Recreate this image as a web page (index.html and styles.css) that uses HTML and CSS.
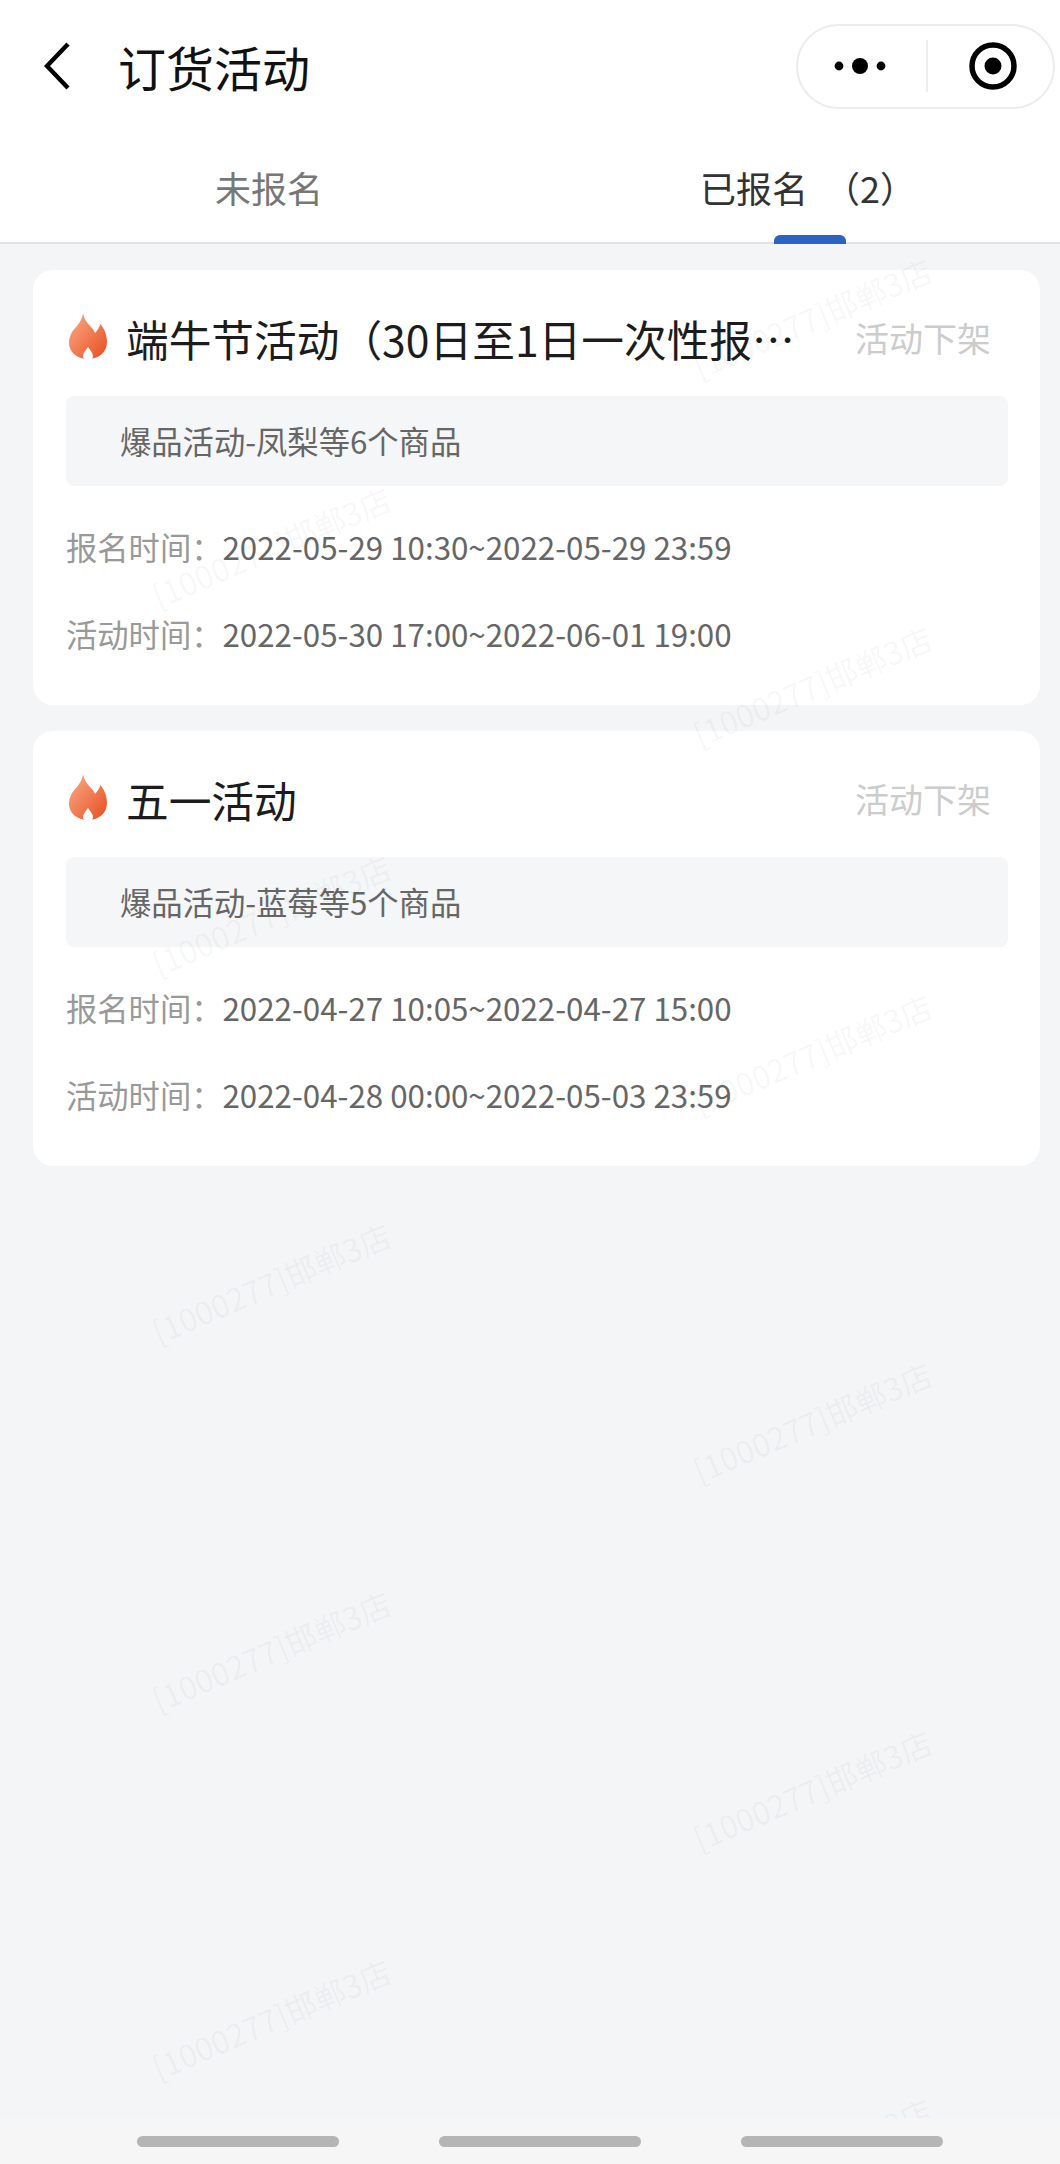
FILE: index.html
```html
<!DOCTYPE html>
<html lang="zh-CN">
<head>
<meta charset="utf-8">
<title>订货活动</title>
<link rel="stylesheet" href="styles.css">
</head>
<body>
<div class="page">
  <header class="nav">
    <div class="nav-bar">
      <svg class="back" viewBox="0 0 26 48" width="26" height="48"><polyline points="24,2 3,24 24,46" fill="none" stroke="#000" stroke-width="4.4"/></svg>
      <h1 class="nav-title">订货活动</h1>
      <div class="capsule">
        <svg class="capsule-dots" viewBox="0 0 56 20" width="56" height="20"><circle cx="6" cy="10" r="4.4" fill="#000"/><circle cx="27" cy="10" r="8" fill="#000"/><circle cx="48" cy="10" r="4.4" fill="#000"/></svg>
        <span class="capsule-line"></span>
        <svg class="capsule-target" viewBox="0 0 48 48" width="48" height="48"><circle cx="24" cy="24" r="21" fill="none" stroke="#000" stroke-width="5.5"/><circle cx="24" cy="24" r="8.5" fill="#000"/></svg>
      </div>
    </div>
    <nav class="tabs">
      <div class="tab">未报名</div>
      <div class="tab tab-active">已报名<span class="tab-count">（2）</span></div>
    </nav>
  </header>

  <main class="list">
    <section class="card">
      <div class="card-head">
        <svg class="flame" viewBox="0 0 38 46" width="38" height="46"><defs><linearGradient id="fa" x1="0.1" y1="0.1" x2="0.9" y2="0.9"><stop offset="0" stop-color="#f9a47e"/><stop offset="1" stop-color="#e9562a"/></linearGradient></defs><path fill-rule="evenodd" d="M14 0C15 6 18 10 22 14C24 16 25.500 18 26 20C28 18 30 15 31.500 11C35.500 16 38 22 38 29C38 39 30 46 19 46C8 46 0 39 0 30C0 22 4 17 8 13C11 9 13.500 5 14 0ZM19 34C17 37 14 40 14 43C14 45 15 46 16 46L22 46C23 46 24 45 24 43C24 40 21 37 19 34Z" fill="url(#fa)"/></svg>
        <h2 class="card-title">端牛节活动（30日至1日一次性报名活动）</h2>
        <span class="card-tag">活动下架</span>
      </div>
      <div class="goods">爆品活动-凤梨等6个商品</div>
      <div class="rows">
        <p class="row"><span class="row-label">报名时间：</span>2022-05-29 10:30~2022-05-29 23:59</p>
        <p class="row"><span class="row-label">活动时间：</span>2022-05-30 17:00~2022-06-01 19:00</p>
      </div>
    </section>
    <section class="card">
      <div class="card-head">
        <svg class="flame" viewBox="0 0 38 46" width="38" height="46"><path fill-rule="evenodd" d="M14 0C15 6 18 10 22 14C24 16 25.500 18 26 20C28 18 30 15 31.500 11C35.500 16 38 22 38 29C38 39 30 46 19 46C8 46 0 39 0 30C0 22 4 17 8 13C11 9 13.500 5 14 0ZM19 34C17 37 14 40 14 43C14 45 15 46 16 46L22 46C23 46 24 45 24 43C24 40 21 37 19 34Z" fill="url(#fa)"/></svg>
        <h2 class="card-title">五一活动</h2>
        <span class="card-tag">活动下架</span>
      </div>
      <div class="goods">爆品活动-蓝莓等5个商品</div>
      <div class="rows">
        <p class="row"><span class="row-label">报名时间：</span>2022-04-27 10:05~2022-04-27 15:00</p>
        <p class="row"><span class="row-label">活动时间：</span>2022-04-28 00:00~2022-05-03 23:59</p>
      </div>
    </section>
  </main>

  <div class="watermarks" aria-hidden="true">
    <div class="wm-col wm-col-left">
      <span class="wm">[1000277]邯郸3店</span>
      <span class="wm">[1000277]邯郸3店</span>
      <span class="wm">[1000277]邯郸3店</span>
      <span class="wm">[1000277]邯郸3店</span>
      <span class="wm">[1000277]邯郸3店</span>
    </div>
    <div class="wm-col wm-col-right">
      <span class="wm">[1000277]邯郸3店</span>
      <span class="wm">[1000277]邯郸3店</span>
      <span class="wm">[1000277]邯郸3店</span>
      <span class="wm">[1000277]邯郸3店</span>
      <span class="wm">[1000277]邯郸3店</span>
      <span class="wm">[1000277]邯郸3店</span>
    </div>
  </div>

  <footer class="tabbar">
    <span class="tabbar-pill"></span>
    <span class="tabbar-pill"></span>
    <span class="tabbar-pill"></span>
  </footer>
</div>
</body>
</html>
```

FILE: styles.css
```css
* { box-sizing: border-box; }

html, body {
  margin: 0;
  padding: 0;
  height: 2164px;
  overflow: hidden;
}

body {
  background: #f4f5f7;
  font-family: "Noto Sans CJK SC", "Noto Sans", sans-serif;
}

.page {
  position: relative;
  height: 2164px;
  display: flex;
  flex-direction: column;
}

/* Header */
.nav {
  position: relative;
  z-index: 2;
  background: #fff;
  border-bottom: 2px solid #e2e3e5;
}

.nav-bar {
  height: 132px;
  display: flex;
  align-items: center;
  padding: 0 5px 0 44px;
}

.back { flex: none; }

.nav-title {
  margin: 0 0 0 48px;
  font-size: 48px;
  line-height: 60px;
  font-weight: 400;
  color: #111;
}

.capsule {
  margin-left: auto;
  width: 259px;
  height: 85px;
  border: 2px solid #ececec;
  border-radius: 43px;
  display: flex;
  align-items: center;
  background: #fff;
}

.capsule-dots { margin-left: 35px; flex: none; }

.capsule-line {
  width: 2px;
  height: 52px;
  margin-left: 37px;
  background: #ececec;
}

.capsule-target { margin-left: 41px; flex: none; }

.tabs {
  height: 110px;
  display: flex;
}

.tab {
  position: relative;
  flex: 0 0 50%;
  display: flex;
  justify-content: center;
  padding: 29px 0 0 8px;
  font-size: 36px;
  line-height: 52px;
  color: #777;
}

.tab-active {
  padding-left: 26px;
  color: #333;
}

.tab-count { margin-left: 16px; }

.tab-active::after {
  content: "";
  position: absolute;
  left: 244px;
  bottom: -2px;
  width: 72px;
  height: 9px;
  border-radius: 6px 6px 0 0;
  background: #2b62c4;
}

/* Cards */
.list {
  flex: 1;
  padding: 26px 20px 0 33px;
  display: flex;
  flex-direction: column;
  gap: 26px;
}

.card {
  background: #fff;
  border-radius: 20px;
  padding: 38px 32px 48px 33px;
  height: 435px;
}

.card-head {
  height: 60px;
  display: flex;
  align-items: center;
}

.flame {
  flex: none;
  margin-left: 3px;
  margin-top: -4px;
}

.card-title {
  margin: 0 0 0 19px;
  flex: 0 1 680px;
  min-width: 0;
  font-size: 42.7px;
  line-height: 60px;
  font-weight: 400;
  color: #1c1c1c;
  white-space: nowrap;
  overflow: hidden;
  text-overflow: ellipsis;
}

.card-tag {
  margin-left: auto;
  margin-right: 17px;
  flex: none;
  font-size: 34px;
  line-height: 50px;
  color: #ccc;
}

.goods {
  margin-top: 28px;
  height: 90px;
  padding: 0 0 2px 54px;
  display: flex;
  align-items: center;
  border-radius: 8px;
  background: #f4f6f8;
  font-size: 31.3px;
  color: #666;
}

.rows {
  margin-top: 39px;
  display: flex;
  flex-direction: column;
  gap: 43px;
}

.row {
  margin: 0;
  font-size: 31.3px;
  line-height: 44px;
  color: #666;
  white-space: nowrap;
}

.row-label { color: #999; }

/* Watermark overlay */
.watermarks {
  position: absolute;
  inset: 0;
  z-index: 1;
  display: flex;
  overflow: hidden;
  pointer-events: none;
}

.wm-col {
  flex: none;
  display: flex;
  flex-direction: column;
  align-items: center;
}

.wm-col-left { width: 542px; padding-top: 362px; }
.wm-col-right { width: 518px; padding: 133px 0 0 22px; }

.wm {
  flex: none;
  height: 368px;
  display: flex;
  align-items: center;
  font-size: 31.5px;
  color: rgba(0, 0, 0, 0.045);
  white-space: nowrap;
  transform: rotate(-23deg);
}

/* Bottom bar */
.tabbar {
  position: relative;
  z-index: 2;
  height: 46px;
  flex: none;
  padding: 18px 0 0 20px;
  display: flex;
  justify-content: center;
  gap: 100px;
  background: #f6f6f6;
}

.tabbar-pill {
  width: 202px;
  height: 11px;
  border-radius: 6px;
  background: #b5b5b5;
}
```
